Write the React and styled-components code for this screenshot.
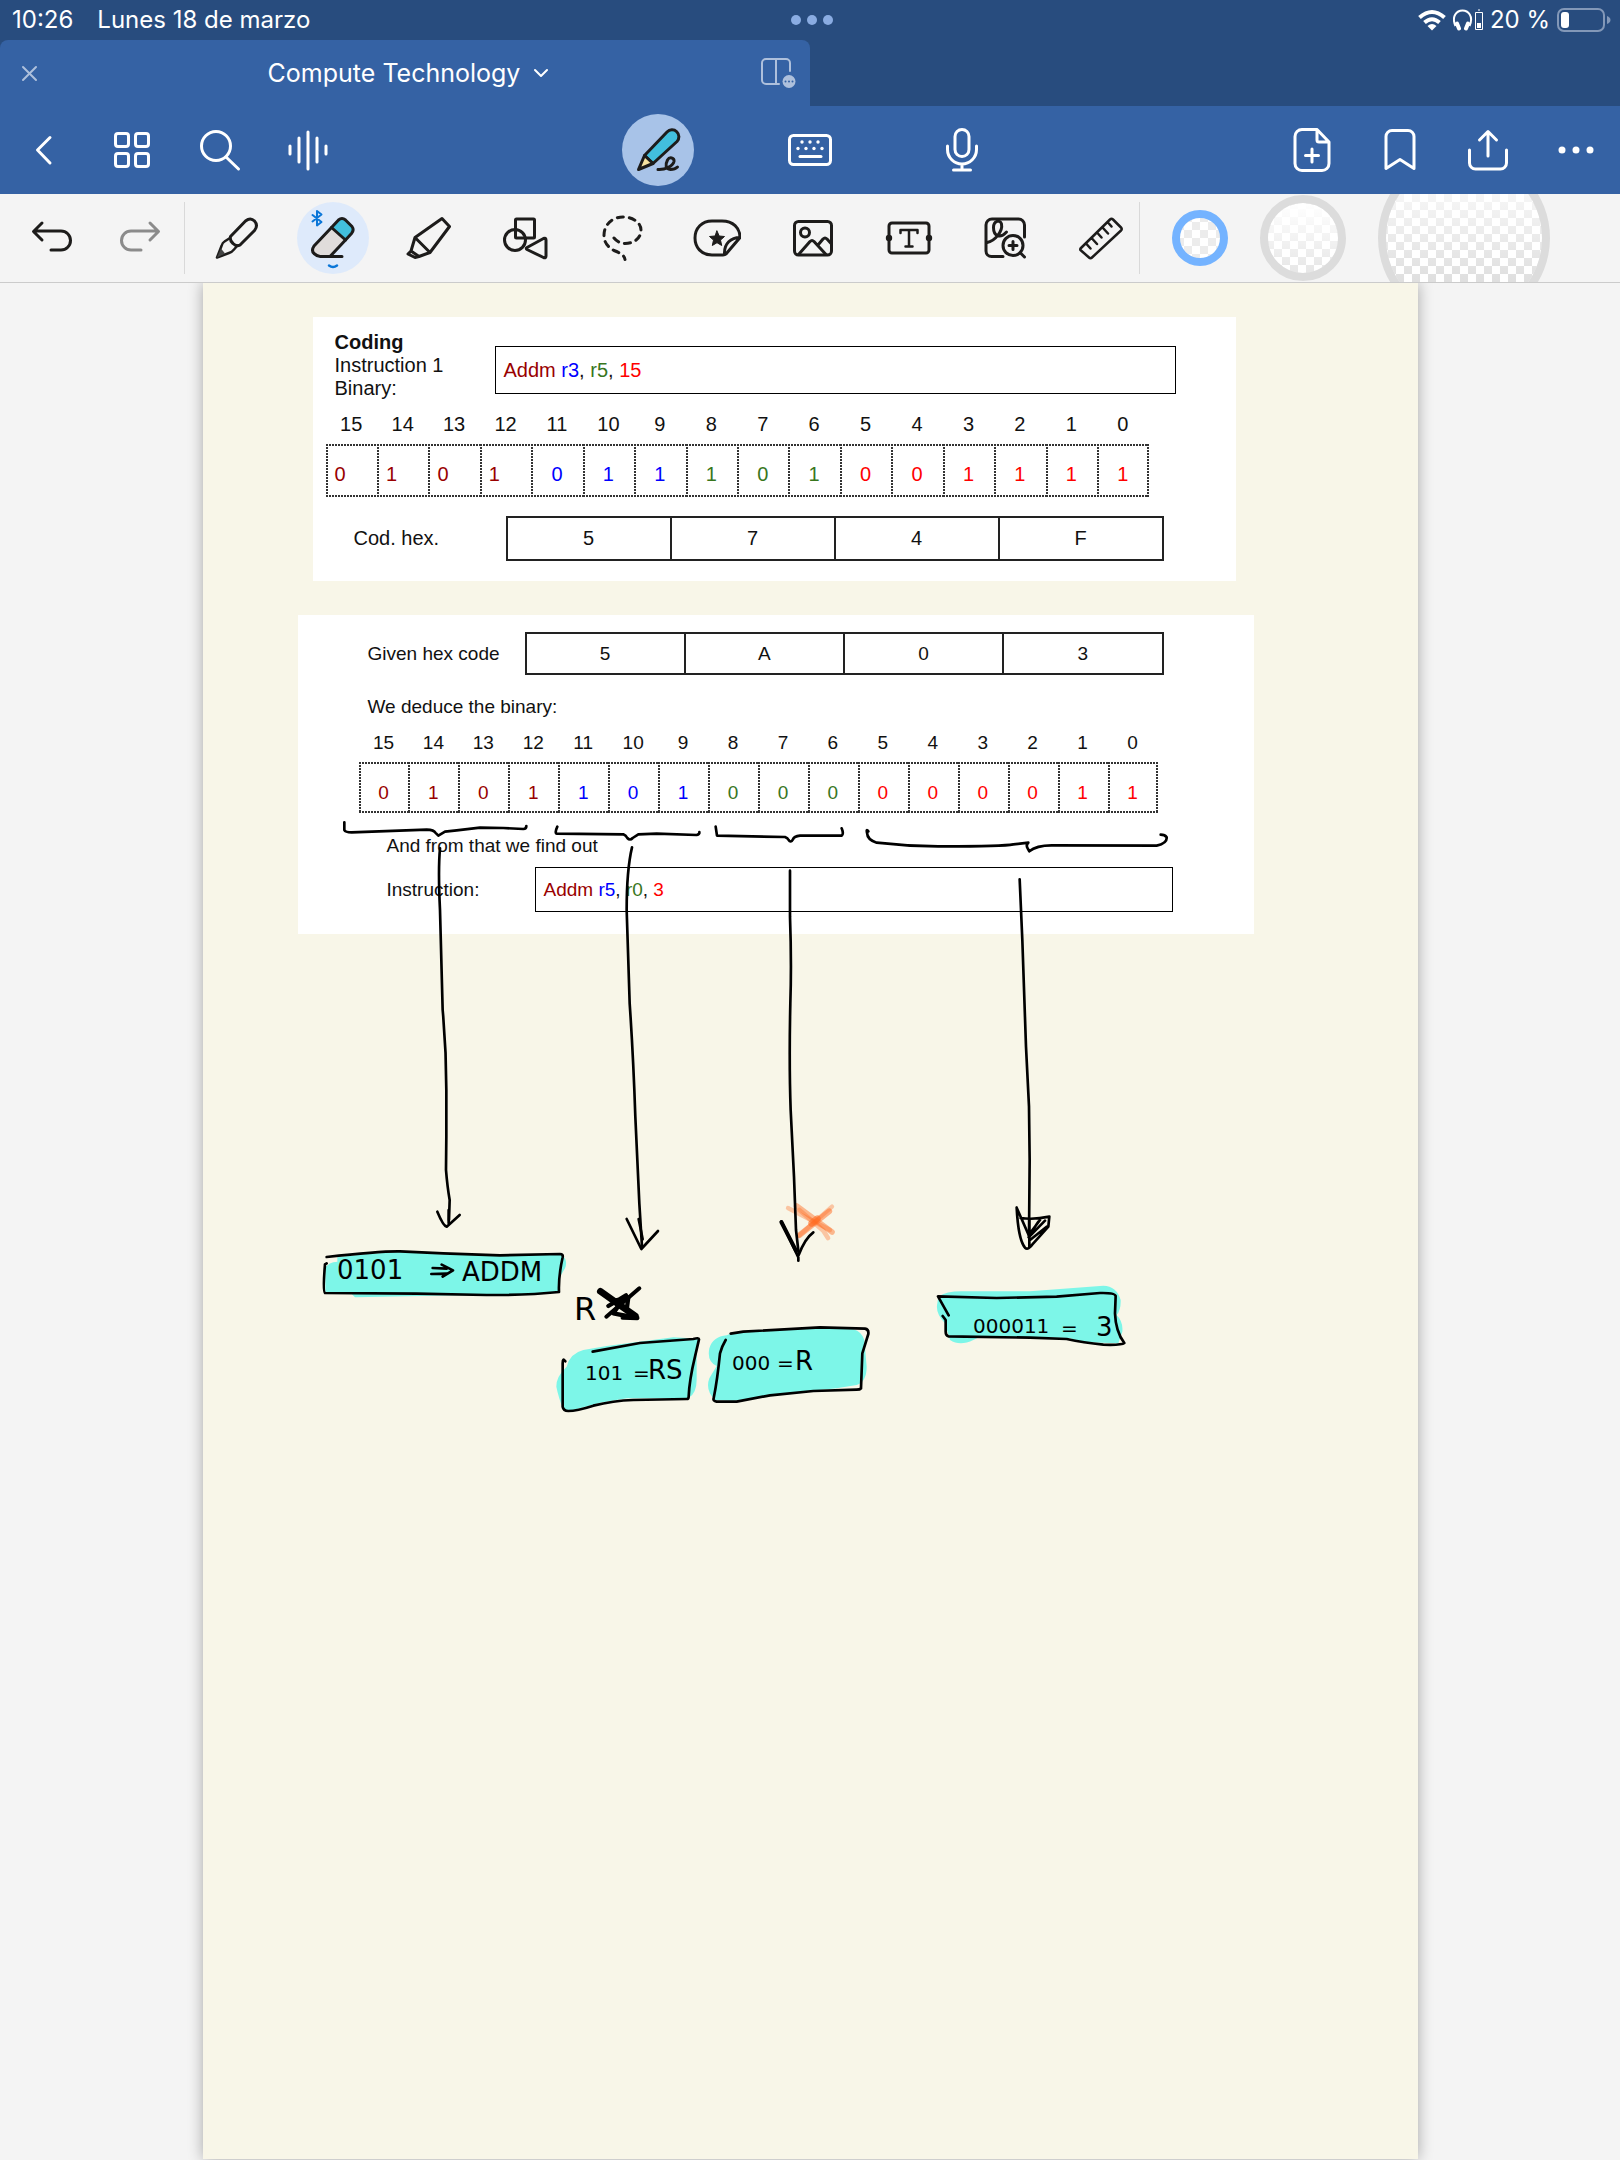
import React from "react";
import styled, { createGlobalStyle, css } from "styled-components";

const GlobalStyle = createGlobalStyle`
  *, *::before, *::after { box-sizing: border-box; }
  body { margin: 0; background: #f4f4f4; }
  button, input { font: inherit; margin: 0; }
`;

const ui = `Inter, "Noto Sans", sans-serif`;
const doc = `"Liberation Sans", Arial, sans-serif`;

const Screen = styled.div`
  min-height: 100vh;
  display: flex;
  flex-direction: column;
  font-family: ${ui};
`;

/* ---------- Status bar and tabs ---------- */
const Header = styled.header`
  background: #284c7e;
  color: #fff;
`;

const StatusBar = styled.div`
  height: 40px;
  padding: 0 9px 0 12px;
  display: grid;
  grid-template-columns: 1fr auto 1fr;
  align-items: center;
  font-size: 24px;
  line-height: 40px;
`;

const StatusGroup = styled.div`
  display: flex;
  align-items: center;
  gap: ${(p) => p.$gap}px;
  justify-content: ${(p) => (p.$end ? "flex-end" : "flex-start")};
`;

const WindowDots = styled.button`
  display: flex;
  gap: 6px;
  padding: 0;
  border: 0;
  background: none;
`;

const WindowDot = styled.span`
  width: 10px;
  height: 10px;
  border-radius: 50%;
  background: #8aace2;
`;

const Tab = styled.div`
  width: 50%;
  height: 66px;
  padding: 0 14px 0 20px;
  border-radius: 8px 8px 0 0;
  background: #3562a4;
  display: grid;
  grid-template-columns: 1fr auto 1fr;
  align-items: center;
`;

const TabButton = styled.button`
  display: flex;
  align-items: center;
  justify-self: ${(p) => p.$side || "center"};
  gap: 14px;
  padding: 0;
  border: 0;
  background: none;
  color: ${(p) => (p.$side ? "#aec0dc" : "#fff")};
  font-size: 25px;
  line-height: 32px;
`;

/* ---------- Navigation bar ---------- */
const NavBar = styled.nav`
  height: 88px;
  background: #3562a4;
  color: #fff;
  display: grid;
  grid-template-columns: 1fr auto 1fr;
  align-items: center;
`;

const NavGroup = styled.div`
  display: flex;
  justify-content: ${(p) => (p.$end ? "flex-end" : "flex-start")};
`;

const IconButton = styled.button`
  width: ${(p) => p.$width}px;
  height: 88px;
  flex: none;
  padding: 0;
  border: 0;
  background: none;
  color: ${(p) => p.$color || "inherit"};
  display: flex;
  align-items: center;
  justify-content: center;
`;

const Highlight = styled.span`
  width: 72px;
  height: 72px;
  border-radius: 50%;
  background: ${(p) => p.$fill};
  display: flex;
  align-items: center;
  justify-content: center;
`;

/* ---------- Drawing tools ---------- */
const ToolBar = styled.div`
  height: 89px;
  background: #f4f4f4;
  border-bottom: 1px solid #cbcbcb;
  color: #1d1c1b;
  display: flex;
  align-items: center;
  overflow: hidden;
`;

const History = styled.div`
  display: flex;
  padding-left: 8px;
`;

const Divider = styled.span`
  width: 1px;
  height: 72px;
  flex: none;
  background: #d9d9d9;
`;

const Tools = styled.div`
  display: flex;
  padding-left: 4px;
  margin-right: -10px;
`;

const Sizes = styled.div`
  display: flex;
  align-items: center;
  gap: 32px;
  height: 88px;
  padding-left: 32px;
`;

const EraserSize = styled.input`
  appearance: none;
  flex: none;
  width: ${(p) => p.$size}px;
  height: ${(p) => p.$size}px;
  border: 8px solid #dcdcdc;
  border-radius: 50%;
  background:
    linear-gradient(#ffffff, rgba(255, 255, 255, ${(p) => p.$fade || 0})) padding-box,
    repeating-conic-gradient(#d6d6d6 0 25%, #fff 0 50%) ${(p) => p.$shift}px ${(p) => p.$shift}px / 16px 16px padding-box;

  &:checked {
    border-color: #74b3ff;
    background: repeating-conic-gradient(#ececec 0 25%, #fff 0 50%) ${(p) => p.$shift}px ${(p) => p.$shift}px / 16px 16px padding-box;
  }
`;

/* ---------- Notebook page ---------- */
const Canvas = styled.main`
  flex: 1;
  display: flex;
  justify-content: center;
  padding-bottom: 1px;
  background: #f4f4f4;
  overflow: hidden;
`;

const Paper = styled.article`
  position: relative;
  width: 75%;
  min-height: 1200px;
  padding-top: 34px;
  background: #f8f6e8;
  box-shadow: 0 0 14px rgba(0, 0, 0, 0.32);
  color: #111;
  font-family: ${doc};
  line-height: 23px;
`;

const Clip = styled.section`
  background: #fff;
  margin: ${(p) => p.$margin};
  padding: ${(p) => p.$padding};
  font-size: ${(p) => p.$font}px;
`;

const Row = styled.div`
  display: flex;
  align-items: ${(p) => p.$align || "center"};
  margin: ${(p) => p.$margin || 0};
`;

const Caption = styled.div`
  width: ${(p) => p.$width}px;
  flex: none;
`;

const Line = styled.p`
  margin: ${(p) => p.$margin || 0};
`;

const Heading = styled.h2`
  margin: 0;
  font-size: inherit;
  font-weight: 700;
`;

const InstructionBox = styled.div`
  flex: 1;
  height: ${(p) => p.$height}px;
  margin-top: ${(p) => p.$top || 0}px;
  padding-left: 8px;
  border: 1px solid #000;
  display: flex;
  align-items: center;
  white-space: pre;
`;

const inks = { op: "#990000", dest: "#0000ff", src: "#38761d", imm: "#ff0000" };

const Part = styled.span`
  color: ${(p) => inks[p.$kind]};
`;

const BitTable = styled.table`
  width: 100%;
  table-layout: fixed;
  border-collapse: separate;
  border-spacing: 0;
`;

const BitIndex = styled.th`
  height: 31px;
  padding: 0;
  vertical-align: top;
  font-weight: 400;
`;

const dotsX = "repeating-linear-gradient(to right, #333 0 2px, transparent 2px 3px)";
const dotsY = "repeating-linear-gradient(to bottom, #333 0 2px, transparent 2px 3px)";

const Bit = styled.td`
  height: ${(p) => p.$height}px;
  padding: 19px 0 0 ${(p) => (p.$flush ? 9 : 0)}px;
  vertical-align: top;
  text-align: ${(p) => (p.$flush ? "left" : "center")};
  color: ${(p) => inks[p.$kind]};
  background:
    ${dotsX} 0 0 / 100% 2px no-repeat,
    ${dotsX} 0 100% / 100% 2px no-repeat,
    ${dotsY} 0 0 / 2px 100% no-repeat;

  ${(p) =>
    p.$last &&
    css`
      background:
        ${dotsX} 0 0 / 100% 2px no-repeat,
        ${dotsX} 0 100% / 100% 2px no-repeat,
        ${dotsY} 0 0 / 2px 100% no-repeat,
        ${dotsY} 100% 0 / 2px 100% no-repeat;
    `}
`;

const HexFrame = styled.div`
  flex: 1;
  min-width: 0;
`;

const HexTable = styled.table`
  width: 100%;
  height: ${(p) => p.$height}px;
  table-layout: fixed;
  border-collapse: collapse;
`;

const HexDigit = styled.td`
  padding: 0;
  border: 2px solid #222;
  text-align: center;
`;

const InkLayer = styled.svg`
  position: absolute;
  top: 0;
  left: 0;
  width: 100%;
  height: auto;
  pointer-events: none;
`;

const Note = styled.text`
  font-family: "DejaVu Sans", sans-serif;
  font-size: ${(p) => p.$size}px;
  fill: #000;
`;

/* ---------- Icons ---------- */
const Icon = ({ size = 48, w = 3, children }) => (
  <svg
    width={size}
    height={size}
    viewBox={`0 0 ${size} ${size}`}
    fill="none"
    stroke="currentColor"
    strokeWidth={w}
    strokeLinecap="round"
    strokeLinejoin="round"
    aria-hidden="true"
  >
    {children}
  </svg>
);

const leftNav = [
  ["Back", <path d="M30 11.500 17.500 24 30 37" />],
  [
    "Thumbnails",
    <>
      <rect x="7.500" y="7.500" width="13" height="13" rx="2.500" />
      <rect x="27.500" y="7.500" width="13" height="13" rx="2.500" />
      <rect x="7.500" y="27.500" width="13" height="13" rx="2.500" />
      <rect x="27.500" y="27.500" width="13" height="13" rx="2.500" />
    </>,
  ],
  [
    "Search",
    <>
      <circle cx="20" cy="20" r="14.500" />
      <path d="M30 31 42.500 43" />
    </>,
  ],
  ["Record audio", <path d="M6 20v8M15 12v24M24 6v37M33 12v24M42 20v8" />],
];

const rightNav = [
  [
    "Add page",
    <>
      <path d="M29 3.500H14a7 7 0 0 0-7 7v27a7 7 0 0 0 7 7h20a7 7 0 0 0 7-7V16L29 3.500v10.500a2 2 0 0 0 2 2h10" />
      <path d="M24 23v13M17.500 29.500h13" />
    </>,
  ],
  ["Bookmark", <path d="M10 42.500V10.500a6 6 0 0 1 6-6h16a6 6 0 0 1 6 6v32l-14-9z" />],
  ["Share", <path d="M5.500 24v13a6 6 0 0 0 6 6h25a6 6 0 0 0 6-6V24M24 30V6M15.500 14 24 5.500 32.500 14" />],
  [
    "More",
    <g fill="currentColor" stroke="none">
      <circle cx="10" cy="24" r="3.500" />
      <circle cx="24" cy="24" r="3.500" />
      <circle cx="38" cy="24" r="3.500" />
    </g>,
  ],
];

const PencilIcon = () => (
  <Icon>
    <path d="M10.500 29.500 33 6a6.500 6.500 0 0 1 10 9.500L19 37.500z" fill="#42bfdd" />
    <path d="M10.500 29.500 4.500 43.500l14.500-6z" fill="#f6e3a1" />
    <path d="M24 43.500c7 .5 15-3.500 16-8 .5-4-4.500-5-6.500-1.500-2.500 5-2 9 3 9.500 3 0 5-.5 7-2.500" />
  </Icon>
);

const KeyboardIcon = () => (
  <Icon>
    <rect x="3.500" y="9.500" width="41" height="29" rx="4" />
    <path d="M14 30.500h21" />
    <g fill="currentColor" stroke="none">
      {[16, 24, 32].map((x) => <circle key={x} cx={x} cy="16" r="1.700" />)}
      {[12, 20, 28, 36].map((x) => <circle key={x} cx={x} cy="22.500" r="1.700" />)}
    </g>
  </Icon>
);

const MicIcon = () => (
  <Icon>
    <rect x="17" y="3.500" width="14" height="27" rx="7" />
    <path d="M9.500 20v3.500a14.500 14.500 0 0 0 29 0V20M24 38.500V44M15.500 44h17" />
  </Icon>
);

const EraserIcon = () => (
  <Icon size={72}>
    <path d="m34.500 25.500-17 18q-4 4.500 0 8l4.500 3Q24 54.500 27 54.500h6l15.500-16.500z" fill="#e0dcdb" stroke="none" />
    <path d="m34.500 25.500 7-7.500q3.500-3 7 0l6.500 6.500q2.500 3.500-.5 7L48.500 38z" fill="#42bfdd" />
    <path d="m34.500 25.500-17.500 18.500q-3 4.500 0 7.500 4 3.500 7 3H45M48.500 38 33 54.500" />
    <g stroke="#0a76d8" strokeWidth="2">
      <path d="m15.500 13 9 7-4.500 3.500V9l4.500 3.500-9 7" />
      <path d="M32 63.500q4 3 8 0" strokeWidth="2.500" />
    </g>
  </Icon>
);

const tools = [
  [
    "Pen",
    <>
      <path d="m17 24-5.500 3.500q-2 1-3 4.500L4 43.500 16 39q3-1 5-3.500l3.500-4" strokeWidth="2.500" />
      <path d="m17.500 22.500 15-15.500q5-4 9 0 4 4.500 0 9.500L27 31q-3.500 2-7-1.500-3.500-3-2.500-7z" />
      <path d="m4 43.500 4-9 4 5z" fill="#444" stroke="none" />
    </>,
  ],
  ["Eraser", null],
  [
    "Highlighter",
    <path d="M10 23.500 37 4.500l7.500 8L25 38.500zM10 23.500 6 37l8 5.500 11-4M6 37l-3 3 7 3.500 4-1" />,
  ],
  [
    "Shapes",
    <>
      <rect x="14.500" y="5" width="19" height="19" rx="1" />
      <circle cx="14" cy="26" r="10.500" />
      <path d="M26 33.500 42.500 24.500q2.500-1 2.500 1.500v16q0 2.500-2.500 1.500L26 35.500q-1.500-1 0-2z" fill="#f4f4f4" />
    </>,
  ],
  [
    "Lasso",
    <path
      d="M17 24q4 5 11 5.500c10 0 16-6 16-13.500C44 8 35 3 26 3 14 3 7 12 7 21c0 8 4 12 10 15.500 6 2.500 10 4 11 9"
      strokeDasharray="6 6"
    />,
  ],
  [
    "Stickers",
    <>
      <path d="M30 41H19C8 41 2 33 2 24 2 14 9 7 19 7h10c11 0 18 7 18 16.500L33 40q-1 1-3 1zM47 23.500c-9 0-16 6-15.500 16.500" />
      <path d="m24 17 2.200 5 5.300.5-4 3.600 1.200 5.400-4.700-2.800-4.700 2.800 1.200-5.400-4-3.600 5.300-.5z" fill="currentColor" strokeWidth="1" />
    </>,
  ],
  [
    "Image",
    <>
      <rect x="5.500" y="7.500" width="37" height="33.500" rx="4" />
      <circle cx="16" cy="18.500" r="4.500" />
      <path d="m10 40 11-12.500q2-2 4 0L37 40.500M29 31l5-6q2-2 4 0l4.500 5" />
    </>,
  ],
  [
    "Text box",
    <>
      <rect x="4" y="9" width="40" height="30" rx="3" />
      <path d="M15.500 19v-3h17v3M24 16v16.500M20.500 32.500h7" strokeWidth="2.500" />
      <circle cx="4" cy="24" r="3.200" fill="currentColor" stroke="none" />
      <circle cx="44" cy="24" r="3.200" fill="currentColor" stroke="none" />
    </>,
  ],
  [
    "Elements",
    <>
      <path d="M43.500 23V11a6 6 0 0 0-6-6H11a6 6 0 0 0-6 6v26a5.500 5.500 0 0 0 5.500 5.500H22" />
      <path d="M6 28.500C14 27 22 17 20.500 10c-1.500-5-8-3-8 3.500 0 8 6 12 13 4.500" />
      <circle cx="32" cy="31.500" r="10" />
      <path d="m39.500 39 4 4M32 27.500v8M28 31.500h8" />
    </>,
  ],
  [
    "Ruler",
    <path d="M4 34 33 5.500q1.500-1.500 3 0l8 8q1.500 1.500 0 3L15 43.500q-1.500 1.500-3 0l-8-7q-1.500-1-0-2.500zM9.500 30l4 4.500M15 24.500l5 5.500M20.500 19l4 4.500M26 14l5 5.500M31 8.500l3.500 4" strokeWidth="2.500" />,
  ],
];

const Wifi = () => (
  <svg width="28" height="22" viewBox="0 0 28 22" fill="none" stroke="#fff" strokeWidth="4" aria-hidden="true">
    <path d="M1.500 8.500q12.500-11 25 0" />
    <path d="M6.500 13.500q7.500-6.500 15 0" />
    <path d="m14 21.500 4.500-4.500q-4.500-4-9 0z" fill="#fff" stroke="none" />
  </svg>
);

const Headphones = () => (
  <svg width="30" height="22" viewBox="0 0 30 22" fill="none" stroke="#fff" strokeWidth="2" aria-hidden="true">
    <path d="M2.500 17C-2 7 4 1.500 9.500 1.500S21 7 16.500 17" />
    <path d="M4 14.500l2 5M15 14.500l-2 5" strokeWidth="4" strokeLinecap="round" />
    <path d="M22.500 3.500h7v17h-7zM25 1h2" strokeWidth="1" />
    <path d="M24 14h4v5h-4z" fill="#fff" stroke="none" />
  </svg>
);

const Battery = () => (
  <svg width="54" height="24" viewBox="0 0 54 24" aria-hidden="true">
    <rect x="1" y="1" width="46" height="22" rx="6" fill="none" stroke="#8398b8" strokeWidth="2" />
    <path d="M50 8q3.500 1.500 3.500 4T50 16z" fill="#8398b8" />
    <rect x="4" y="4" width="8" height="16" rx="3" fill="#fff" />
  </svg>
);

/* ---------- Document parts ---------- */
const kindOf = (i) => (i < 4 ? "op" : i < 7 ? "dest" : i < 10 ? "src" : "imm");

const Bits = ({ value, height, flushOp }) => (
  <BitTable>
    <thead>
      <tr>
        {[...value].map((_, i) => (
          <BitIndex key={i} scope="col">{15 - i}</BitIndex>
        ))}
      </tr>
    </thead>
    <tbody>
      <tr>
        {[...value].map((b, i) => (
          <Bit key={i} $height={height} $kind={kindOf(i)} $flush={flushOp && i < 4} $last={i === 15}>
            {b}
          </Bit>
        ))}
      </tr>
    </tbody>
  </BitTable>
);

const Hex = ({ value, height }) => (
  <HexFrame>
    <HexTable $height={height}>
      <tbody>
        <tr>
          {[...value].map((d, i) => (
            <HexDigit key={i}>{d}</HexDigit>
          ))}
        </tr>
      </tbody>
    </HexTable>
  </HexFrame>
);

const Instruction = ({ dest, src, imm, ...rest }) => (
  <InstructionBox {...rest}>
    <Part $kind="op">Addm </Part>
    <Part $kind="dest">{dest}</Part>
    {", "}
    <Part $kind="src">{src}</Part>
    {", "}
    <Part $kind="imm">{imm}</Part>
  </InstructionBox>
);

const Ink = () => (
  <InkLayer viewBox="203 283 1215 1200" role="img" aria-label="Handwritten annotations">
    {/* marker fills */}
    <g fill="#7df6e8">
      <g transform="translate(300 1180) scale(.33333)">
        <path d="M76 335V265Q85 245 112 245V232L200 222 300 216 420 223 640 226 785 224Q805 240 795 265L780 290V338L640 344 480 346 165 352 155 342z" />
        <path d="M800 560Q810 520 850 510L920 498 1120 472 1198 476 1190 500V600Q1190 640 1165 655H980L900 668 820 690H790Q775 650 769 620 768 590 800 560z" />
      </g>
      <g transform="translate(680 1180) scale(.33333)">
        <path d="M110 558Q80 545 88 505 98 470 140 466L155 460 400 445 520 448Q545 455 553 480L560 560Q560 605 530 615L470 625 380 634 160 662 105 660Q75 630 88 595z" />
        <path d="M775 350Q800 333 850 334H1050L1270 317Q1310 318 1322 360 1323 390 1310 405 1330 425 1327 455L1315 490 1200 486 1170 474 900 470 880 480Q840 500 810 480L795 430Q765 400 772 370z" />
      </g>
    </g>

    {/* orange cross */}
    <g transform="translate(680 1180) scale(.33333)" fill="none" stroke="#ff6a1f" strokeLinecap="round">
      <path d="M324 84 450 150" strokeWidth="13" opacity=".35" />
      <path d="M350 78 456 156" strokeWidth="17" opacity=".45" />
      <path d="M358 90 430 152 444 174" strokeWidth="14" opacity=".35" />
      <path d="M358 166 456 80" strokeWidth="13" opacity=".35" />
      <path d="M358 166 448 94" strokeWidth="17" opacity=".5" />
      <path d="M395 130 412 116" strokeWidth="20" opacity=".6" />
    </g>

    <g fill="none" stroke="#000" strokeWidth="8" strokeLinecap="round" strokeLinejoin="round">
      {/* braces under the bit groups */}
      <g transform="translate(290 610) scale(.33333)">
        <path d="M163 637V660Q166 667 185 667L410 659Q432 660 436 668L445 677 465 665 500 661 570 653 640 654 700 657Q709 657 709 648" />
        <path d="M802 650Q793 670 801 671L1000 673Q1008 676 1012 684 1020 693 1028 684L1045 673 1100 671 1220 675Q1230 672 1228 666" />
        <path d="M1277 650 1281 677 1485 681Q1493 684 1496 690 1502 700 1509 688 1512 679 1530 677L1655 677Q1662 672 1655 655" />
        <path d="M1735 664Q1728 655 1731 668 1732 690 1760 698 1860 710 1960 709 2140 709 2170 703L2215 698Q2207 705 2213 715L2218 724Q2240 705 2290 706L2600 707Q2632 700 2630 682 2625 674 2612 674" />
      </g>
      {/* arrow shafts */}
      <g transform="translate(420 830) scale(.33333)">
        <path d="M60 55Q54 120 60 240L68 540Q79 660 79 780V920L78 1020Q82 1070 89 1110L87 1170" />
        <path d="M636 52Q620 120 620 240L629 520Q640 680 646 860L658 1120 666 1250" />
        <path d="M1110 122 1110 260Q1115 400 1111 520 1107 700 1112 840L1122 1040 1128 1200 1136 1270" />
      </g>
      <g transform="translate(760 840) scale(.33333)">
        <path d="M779 118 787 300 798 620 807 800 809 960 807 1190" />
      </g>
      {/* arrow heads, note frames, implication arrow, crossed-out digit */}
      <g transform="translate(300 1180) scale(.33333)">
        <path d="M412 95Q430 138 440 140L479 105M446 90V130" />
        <path d="M980 117 1024 207 1074 153M1016 117 1028 178" />
        <path d="M80 231Q240 213 300 214L430 220 600 226 780 222Q790 222 788 232 775 290 777 336 680 346 560 345L350 341 75 339Q68 335 75 253M75 253L80 250" />
        <path d="M796 544Q788 532 788 550V680Q790 692 805 693 830 693 880 677 940 662 1000 660L1160 657Q1166 657 1166 650 1168 600 1185 530L1197 478Q1197 472 1180 477L1020 489 878 515" />
        <path d="M398 264 440 266M394 282 440 281M425 254 459 271 428 290" />
        <path d="M901 334 960 376 1006 408" strokeWidth="20" />
        <path d="M919 410 1018 325" strokeWidth="12" />
        <path d="M925 378 978 346 940 400 1012 414 968 413M945 362 985 352 980 390" strokeWidth="13" />
      </g>
      <g transform="translate(680 1180) scale(.33333)">
        <path d="M304 124 355 232V242M356 225Q375 175 400 157" />
        <path d="M304 126 348 212" strokeWidth="12" />
        <path d="M152 461 190 455 420 442 555 446Q567 448 565 462L547 520 543 625Q540 629 530 629L400 633 270 646 170 665 110 665Q98 662 101 655 112 600 120 520 125 500 137 480" />
        <path d="M1010 83Q1015 180 1035 203 1045 212 1060 190L1105 140 1108 110Q1060 120 1022 114M1010 83 1046 165M1046 165 1080 120M1046 172 1095 122M1050 180 1100 140M1062 145 1075 125M1048 120V200" />
        <path d="M806 406 774 349 950 354 1130 350 1260 339Q1306 338 1307 348L1305 400Q1307 455 1333 489 1325 496 1270 494 1210 488 1160 477L1050 473 805 469Q797 466 797 455V420L788 408" />
      </g>
    </g>

    <Note x="337" y="1279" $size={26}>0101</Note>
    <Note x="462" y="1281" $size={26}>ADDM</Note>
    <Note x="574" y="1320" $size={32}>R</Note>
    <Note x="585" y="1380" $size={20}>101</Note>
    <Note x="633" y="1380" $size={20}>=</Note>
    <Note x="648" y="1379" $size={26}>RS</Note>
    <Note x="732" y="1370" $size={20}>000</Note>
    <Note x="777" y="1370" $size={20}>=</Note>
    <Note x="795" y="1370" $size={26}>R</Note>
    <Note x="973" y="1333" $size={20}>000011</Note>
    <Note x="1061" y="1335" $size={20}>=</Note>
    <Note x="1096" y="1336" $size={26}>3</Note>
  </InkLayer>
);

export default function App() {
  return (
    <Screen>
      <GlobalStyle />
      <Header>
        <StatusBar>
          <StatusGroup $gap={24}>
            <span>10:26</span>
            <span>Lunes 18 de marzo</span>
          </StatusGroup>
          <WindowDots aria-label="Window options">
            <WindowDot />
            <WindowDot />
            <WindowDot />
          </WindowDots>
          <StatusGroup $gap={7} $end>
            <Wifi />
            <Headphones />
            <span>20 %</span>
            <Battery />
          </StatusGroup>
        </StatusBar>
        <Tab>
          <TabButton $side="start" aria-label="Close tab">
            <Icon size={20} w={2}>
              <path d="m3 4 13 13M16 4 3 17" />
            </Icon>
          </TabButton>
          <TabButton>
            Compute Technology
            <Icon size={14} w={2}>
              <path d="m1 4 6 6 6-6" />
            </Icon>
          </TabButton>
          <TabButton $side="end" aria-label="Split view">
            <Icon size={36} w={2}>
              <path d="M16 4v25M30 16V8a4 4 0 0 0-4-4H6a4 4 0 0 0-4 4v17a4 4 0 0 0 4 4h13" />
              <circle cx="29" cy="26.500" r="6.500" fill="currentColor" stroke="none" />
              <path d="M25.500 26.500h.01M29 26.500h.01M32.500 26.500h.01" stroke="#3562a4" />
            </Icon>
          </TabButton>
        </Tab>
        <NavBar>
          <NavGroup>
            {leftNav.map(([label, art]) => (
              <IconButton key={label} aria-label={label} $width={88}>
                <Icon>{art}</Icon>
              </IconButton>
            ))}
          </NavGroup>
          <NavGroup>
            <IconButton aria-label="Draw" $width={152} $color="#1d1c1b">
              <Highlight $fill="#a8c3e8">
                <PencilIcon />
              </Highlight>
            </IconButton>
            <IconButton aria-label="Type" $width={152}>
              <KeyboardIcon />
            </IconButton>
            <IconButton aria-label="Dictate" $width={152}>
              <MicIcon />
            </IconButton>
          </NavGroup>
          <NavGroup $end>
            {rightNav.map(([label, art]) => (
              <IconButton key={label} aria-label={label} $width={88}>
                <Icon>{art}</Icon>
              </IconButton>
            ))}
          </NavGroup>
        </NavBar>
      </Header>

      <ToolBar role="toolbar" aria-label="Drawing tools">
        <History>
          <IconButton aria-label="Undo" $width={88}>
            <Icon>
              <path d="M23 36h10a9.500 9.500 0 0 0 0-19H6M14 9 5.500 17.500 14 26" />
            </Icon>
          </IconButton>
          <IconButton aria-label="Redo" $width={88} $color="#8b8b8b">
            <Icon>
              <path d="M25 36H15a9.500 9.500 0 0 1 0-19h27M34 9l8.500 8.500L34 26" />
            </Icon>
          </IconButton>
        </History>
        <Divider />
        <Tools>
          {tools.map(([label, art]) => (
            <IconButton key={label} aria-label={label} $width={96}>
              {art ? (
                <Icon>{art}</Icon>
              ) : (
                <Highlight $fill="#deeafb">
                  <EraserIcon />
                </Highlight>
              )}
            </IconButton>
          ))}
        </Tools>
        <Divider />
        <Sizes>
          <EraserSize type="radio" name="eraser" aria-label="Small eraser" $size={56} $shift={4} defaultChecked />
          <EraserSize type="radio" name="eraser" aria-label="Medium eraser" $size={86} $shift={6} $fade={0.4} />
          <EraserSize type="radio" name="eraser" aria-label="Large eraser" $size={172} $shift={2} />
        </Sizes>
      </ToolBar>

      <Canvas>
        <Paper>
          <Clip $font={20} $margin="0 182px 0 110px" $padding="14px 60px 20px 13px">
            <Row $align="flex-start">
              <Row $margin="0 0 0 9px">
                <Caption $width={160}>
                  <Heading>Coding</Heading>
                  <Line>Instruction 1</Line>
                  <Line>Binary:</Line>
                </Caption>
              </Row>
              <Instruction $height={48} $top={15} dest="r3" src="r5" imm="15" />
            </Row>
            <Row $margin="13px 27px 0 0">
              <Bits value="0101011101001111" height={53} flushOp />
            </Row>
            <Row $margin="19px 12px 0 28px">
              <Caption $width={152}>Cod. hex.</Caption>
              <Hex value="574F" height={45} />
            </Row>
          </Clip>

          <Clip $font={19} $margin="34px 164px 0 95px" $padding="17px 81px 22px 61px">
            <Row $margin="0 9px 0 9px">
              <Caption $width={157}>Given hex code</Caption>
              <Hex value="5A03" height={43} />
            </Row>
            <Line $margin="20px 9px 13px">We deduce the binary:</Line>
            <Row $margin="0 15px 0 0">
              <Bits value="0101101000000011" height={51} />
            </Row>
            <Line $margin="21px 28px 10px">And from that we find out</Line>
            <Row $margin="0 0 0 28px">
              <Caption $width={148}>Instruction:</Caption>
              <Instruction $height={45} dest="r5" src="r0" imm="3" />
            </Row>
          </Clip>
          <Ink />
        </Paper>
      </Canvas>
    </Screen>
  );
}
